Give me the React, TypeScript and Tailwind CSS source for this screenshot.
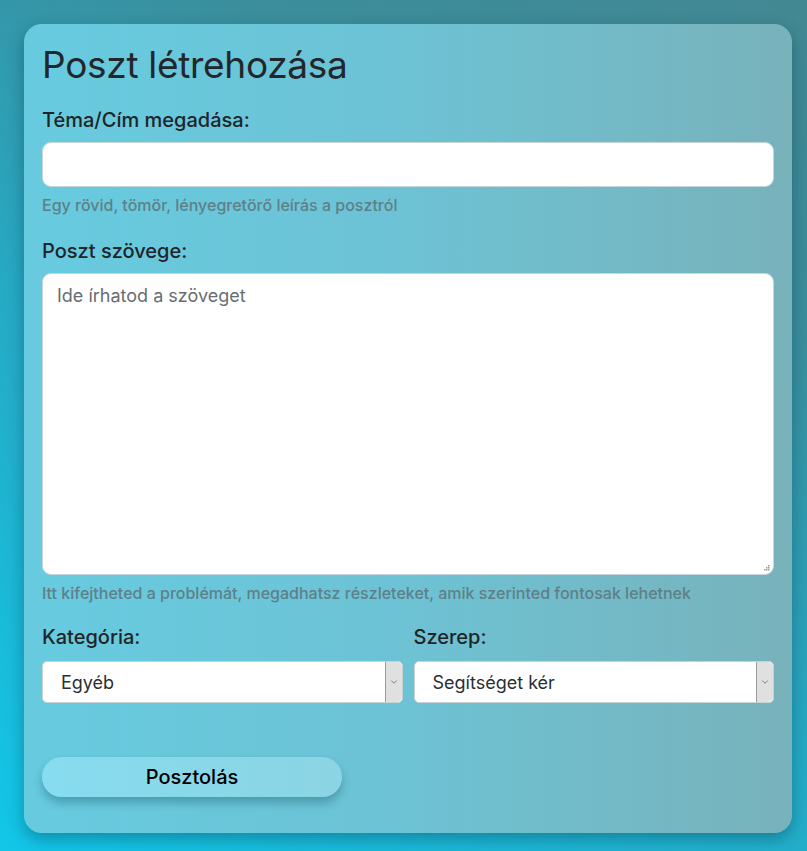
import { ChevronDown } from 'lucide-react';

const font = { fontFamily: 'Inter, "Noto Sans", sans-serif' };

function SelectBox({ value }: { value: string }) {
  return (
    <div className="relative h-[42px] rounded-[5px] border border-[#c9d3d6] bg-white">
      <select
        defaultValue={value}
        className="h-full w-full appearance-none rounded-[5px] bg-transparent pl-[18px] text-[18px] text-[#2a2f33] outline-none"
      >
        <option>{value}</option>
      </select>
      <span className="pointer-events-none absolute right-[0px] top-[0px] flex h-full w-[17px] items-center justify-center rounded-r-[5px] border-l border-[#9a9a9a] bg-[#e0e0e0]">
        <ChevronDown size={10} strokeWidth={1.5} className="text-[#444]" />
      </span>
    </div>
  );
}

function Grip() {
  // chrome-style dotted resize corner
  const dots = [
    [8, 0],
    [6, 2],
    [8, 2],
    [4, 4],
    [6, 4],
    [8, 4],
  ];
  return (
    <svg width="10" height="6" className="pointer-events-none absolute right-[4px] bottom-[4px]">
      {dots.map(([x, y]) => (
        <rect key={`${x}-${y}`} x={x} y={y} width="1.5" height="1.5" fill="#9a9a9a" />
      ))}
    </svg>
  );
}

export default function App() {
  return (
    <div
      style={font}
      className="min-h-[851px] bg-[linear-gradient(30deg,#12c6e8_0%,#27a8c2_45%,#3b8e9c_75%,#428893_100%)] pl-6 pt-6 pb-[19px]"
    >
      <div className="w-[768px] rounded-[18px] bg-[linear-gradient(90deg,#67cbe0_0%,#6dc2d4_50%,#78b2bb_100%)] px-[18px] pt-[18px] pb-[36px] shadow-[0_6px_16px_rgba(0,40,60,0.35)]">
        <h1 className="text-[37px] leading-[45px] font-normal tracking-[-0.3px] text-[#22272b]">Poszt létrehozása</h1>

        <label className="mt-[21px] block text-[20px] leading-[24px] font-medium text-[#1f2428]">Téma/Cím megadása:</label>
        <input className="mt-[10px] block h-[45px] w-full rounded-[9px] border border-[#c6d5da] bg-white px-3 text-[16px] outline-none" />
        <p className="mt-[8px] text-[16px] leading-[20px] font-medium text-[#5f7f88]">Egy rövid, tömör, lényegretörő leírás a posztról</p>

        <label className="mt-[24px] block text-[20px] leading-[24px] font-medium text-[#1f2428]">Poszt szövege:</label>
        <div className="relative mt-[10px]">
          <textarea
            placeholder="Ide írhatod a szöveget"
            className="block h-[302px] w-full resize-none rounded-[9px] border border-[#c6d5da] bg-white px-[14px] py-[10px] text-[18px] leading-[24px] text-[#2a2f33] outline-none placeholder:text-[#686d72]"
          />
          <Grip />
        </div>
        <p className="mt-[8px] text-[16px] leading-[20px] font-medium text-[#5f7f88]">
          Itt kifejtheted a problémát, megadhatsz részleteket, amik szerinted fontosak lehetnek
        </p>

        <div className="mt-[22px] grid grid-cols-2 gap-[11px]">
          <div>
            <label className="block text-[20px] leading-[24px] font-medium text-[#1f2428]">Kategória:</label>
            <div className="mt-[12px]">
              <SelectBox value="Egyéb" />
            </div>
          </div>
          <div>
            <label className="block text-[20px] leading-[24px] font-medium text-[#1f2428]">Szerep:</label>
            <div className="mt-[12px]">
              <SelectBox value="Segítséget kér" />
            </div>
          </div>
        </div>

        <button className="mt-[54px] h-[40px] w-[300px] rounded-full bg-[linear-gradient(90deg,#87dcef,#8bd4e3)] text-[20px] font-medium text-black shadow-[0_6px_10px_rgba(0,60,80,0.3)]">
          Posztolás
        </button>
      </div>
    </div>
  );
}
